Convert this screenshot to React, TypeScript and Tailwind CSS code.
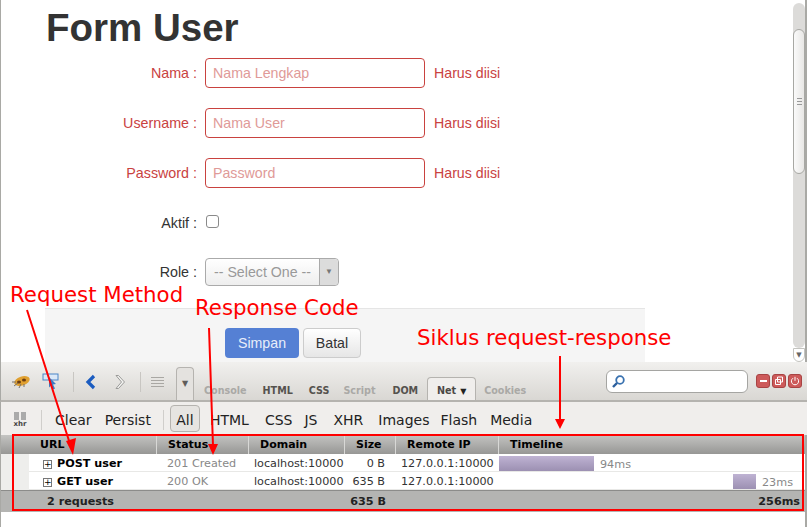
const sansFont = { fontFamily: '"Liberation Sans", Arial, sans-serif' };

const FormRow = ({
  label,
  error,
  rowClass = "mb-5",
  children,
}: {
  label: string;
  error?: string;
  rowClass?: string;
  children: React.ReactNode;
}) => (
  <div className={`flex items-center h-[30px] ${rowClass} ${error ? "text-[#c9423f]" : "text-[#333]"}`}>
    <label className="w-[152px] pt-[2px] text-right text-[14.3px]">{label} :</label>
    <div className="ml-2 w-[220px] shrink-0">{children}</div>
    {error && <span className="ml-[9px] pt-[2px] text-[14.2px]">{error}</span>}
  </div>
);

const TextField = ({ placeholder }: { placeholder: string }) => (
  <input
    readOnly
    placeholder={placeholder}
    className="w-full h-[30px] px-[7px] text-[14.2px] rounded border border-[#c9423f] bg-white placeholder:text-[#e09a98] outline-none"
  />
);

const Scrollbar = () => (
  <div className="w-[14px] shrink-0 flex flex-col bg-white border-r-2 border-[#a9a9a5]">
    <div className="w-3 h-[3px] bg-white" />
    <div className="w-3 flex-1 bg-[#dcdbd9] rounded-t-md rounded-b-md pt-[26px]">
      <div className="h-[145px] w-3 rounded-md border border-[#a8a8a4] bg-gradient-to-r from-[#fafafa] to-[#e8e7e5] flex flex-col items-center justify-center gap-[2px]">
        <span className="w-[5px] h-px bg-[#999]" />
        <span className="w-[5px] h-px bg-[#999]" />
        <span className="w-[5px] h-px bg-[#999]" />
      </div>
    </div>
    <div className="w-3 h-[14px] bg-white border border-[#c4c4c0] rounded-b-md flex items-center justify-center text-[7px] text-[#666]">
      ▼
    </div>
  </div>
);

const FirebugIcon = () => (
  <svg width="20" height="16" viewBox="0 0 20 16">
    <ellipse cx="11" cy="7" rx="8" ry="4.5" fill="#e0a030" transform="rotate(-18 11 7)" />
    <ellipse cx="8" cy="8" rx="2" ry="1.6" fill="#6b3d12" />
    <ellipse cx="13" cy="6" rx="2" ry="1.5" fill="#6b3d12" />
    <path d="M1 8h4M3 12l4-3M8 14l2-4M13 13l0-3" stroke="#77716a" strokeWidth="1" fill="none" />
  </svg>
);

const InspectIcon = () => (
  <svg width="18" height="18" viewBox="0 0 18 18">
    <rect x="1" y="1" width="15" height="6" fill="#dbe8f7" stroke="#4a86c8" />
    <path d="M7 4l7 7-3 .5 2 4-2 1-2-4-2 2z" fill="#3c7cc4" />
  </svg>
);

const Tab = ({ label, muted, ml }: { label: string; muted?: boolean; ml: string }) => (
  <span className={`${ml} pt-[6px] ${muted ? "text-[#aaa9a6]" : "text-[#55524e]"}`}>{label}</span>
);

const FilterItem = ({ label, ml }: { label: string; ml: string }) => (
  <span className={ml}>{label}</span>
);

const columns = [
  { label: "URL", cls: "w-[156px] pl-[39px]" },
  { label: "Status", cls: "w-[92px] pl-[11px]" },
  { label: "Domain", cls: "w-[96px] pl-[11px]" },
  { label: "Size", cls: "w-[51px] pl-[11px]" },
  { label: "Remote IP", cls: "w-[103px] pl-[11px]" },
  { label: "Timeline", cls: "flex-1 pl-[11px]" },
];

const requests = [
  { name: "POST user", status: "201 Created", domain: "localhost:10000", size: "0 B", bar: "ml-0 w-[95px]", time: "94ms" },
  { name: "GET user", status: "200 OK", domain: "localhost:10000", size: "635 B", bar: "ml-[234px] w-[23px]", time: "23ms" },
];

const Annotations = () => (
  <>
    <svg className="absolute inset-0 pointer-events-none" width="807" height="527">
      <path d="M27 310L71 447M209 328L213 446M560 356V421" stroke="#ff0000" strokeWidth="2" fill="none" />
      <path d="M66 441L73 455L76 438zM208 444L213 455L218 444zM555 419L560 429L565 419z" fill="#ff0000" />
      <rect x="13" y="435" width="790" height="75" stroke="#ff0000" strokeWidth="2" fill="none" />
    </svg>
    <span className="absolute left-[10px] top-[281px] text-[21.3px] leading-[28px] text-[#ff0000]">Request Method</span>
    <span className="absolute left-[195px] top-[294px] text-[21.3px] leading-[28px] text-[#ff0000]">Response Code</span>
    <span className="absolute left-[417px] top-[324px] text-[21.3px] leading-[28px] text-[#ff0000]">Siklus request-response</span>
  </>
);

export default function App() {
  return (
    <div
      className="relative w-[807px] h-[527px] overflow-hidden bg-white flex flex-col"
      style={{ fontFamily: '"DejaVu Sans", sans-serif' }}
    >
      {/* Page */}
      <div className="h-[362px] flex border-l border-[#a9a9a5]">
        <div className="flex-1 min-w-0 flex flex-col pl-[44px]" style={sansFont}>
          <h1 className="text-[38.5px] leading-[56px] font-bold text-[#333] mb-[2px] pl-px">Form User</h1>
          <FormRow label="Nama" error="Harus diisi">
            <TextField placeholder="Nama Lengkap" />
          </FormRow>
          <FormRow label="Username" error="Harus diisi">
            <TextField placeholder="Nama User" />
          </FormRow>
          <FormRow label="Password" error="Harus diisi">
            <TextField placeholder="Password" />
          </FormRow>
          <FormRow label="Aktif" rowClass="mb-[19px]">
            <div className="w-[13px] h-[13px] ml-px -mt-[3px] rounded-[3px] border border-[#8a8a8a] bg-white" />
          </FormRow>
          <FormRow label="Role" rowClass="mb-[21px]">
            <div className="w-[134px] h-[28px] flex rounded border border-[#aaa] bg-gradient-to-b from-white to-[#eee] text-[14.2px] text-[#999]">
              <span className="flex-1 pl-2 leading-[26px]">-- Select One --</span>
              <span className="w-[19px] border-l border-[#aaa] bg-[#dcdcdc] rounded-r flex items-center justify-center text-[8px] text-[#777]">
                ▼
              </span>
            </div>
          </FormRow>
          <div className="w-[600px] h-[54px] bg-[#f5f5f5] border-t border-[#e5e5e5] flex items-start pt-[19px] pl-[180px] text-[14.2px]">
            <button className="w-[74px] h-[30px] pt-[2px] rounded bg-[#5580d4] text-[#e8eefa]">Simpan</button>
            <button className="ml-1 w-[58px] h-[30px] pt-[2px] rounded border border-[#ccc] bg-gradient-to-b from-white to-[#e6e6e6] text-[#333]">
              Batal
            </button>
          </div>
        </div>
        <Scrollbar />
      </div>

      {/* Firebug toolbar */}
      <div className="h-[40px] pt-[6px] flex items-end border-l border-[#a9a9a5] border-b-2 border-b-[#b5b3af] bg-gradient-to-b from-[#f1f0ee] to-[#d9d7d3] text-[9.6px] font-bold">
        <div className="flex items-center h-[32px] pb-1 ml-[10px]">
          <FirebugIcon />
          <div className="ml-[11px]"><InspectIcon /></div>
          <span className="ml-[13px] w-px h-5 bg-[#c8c6c2]" />
          <svg className="ml-[11px]" width="12" height="16" viewBox="0 0 12 16">
            <path d="M9 2L3 8l6 6" stroke="#1b5cc0" strokeWidth="3.2" fill="none" />
          </svg>
          <svg className="ml-[17px]" width="12" height="16" viewBox="0 0 12 16">
            <path d="M2 1.5h2.5L10.5 8l-6 6.5H2L7.5 8z" stroke="#9a9a98" strokeWidth="1" fill="#f4f4f2" />
          </svg>
          <span className="ml-[14px] w-px h-5 bg-[#c8c6c2]" />
          <div className="ml-[10px] flex flex-col gap-[2px]">
            <span className="w-[13px] h-px bg-[#a9a7a3]" />
            <span className="w-[13px] h-px bg-[#a9a7a3]" />
            <span className="w-[13px] h-px bg-[#a9a7a3]" />
            <span className="w-[13px] h-px bg-[#a9a7a3]" />
          </div>
        </div>
        <div className="ml-[12px] w-[18px] h-[33px] border border-b-0 border-[#b5b3af] rounded-t bg-[#e4e2df] flex items-center justify-center text-[8px] text-[#5f5d5a]">
          ▼
        </div>
        <div className="flex items-center h-[23px] ml-[10px]">
          <Tab label="Console" muted ml="ml-0" />
          <Tab label="HTML" ml="ml-[16px]" />
          <Tab label="CSS" ml="ml-[16px]" />
          <Tab label="Script" muted ml="ml-[14px]" />
          <Tab label="DOM" ml="ml-[17px]" />
          <div className="ml-[9px] w-[49px] h-[23px] pt-[5px] border border-b-0 border-[#b5b3af] rounded-t bg-[#f0eeec] flex items-center justify-center gap-[4px] text-[#4a4845]">
            Net <span className="text-[8px] text-[#222]">▼</span>
          </div>
          <Tab label="Cookies" muted ml="ml-[8px]" />
        </div>
        <div className="ml-auto flex items-center h-[32px] pb-[6px]">
          <div className="w-[142px] h-[23px] rounded-md border border-[#a5a5a2] bg-white flex items-center pl-1">
            <svg width="15" height="15" viewBox="0 0 15 15">
              <circle cx="9" cy="6" r="3.8" stroke="#3a72b0" strokeWidth="1.8" fill="none" />
              <path d="M6 9l-4 4" stroke="#2c5f9c" strokeWidth="2.4" />
            </svg>
          </div>
          <div className="ml-2 flex gap-[2px] mr-[5px]">
            <span className="w-[14px] h-[14px] rounded-[3px] bg-[#cd5a5a] border border-[#a84444] flex items-center justify-center">
              <span className="w-[7px] h-[2px] bg-white" />
            </span>
            <span className="w-[14px] h-[14px] rounded-[3px] bg-[#cd5a5a] border border-[#a84444] flex items-center justify-center">
              <svg width="10" height="10" viewBox="0 0 10 10">
                <path d="M3.5 1h5v5h-5zM1.5 3.5h5v5h-5z" stroke="#fff" fill="none" />
              </svg>
            </span>
            <span className="w-[14px] h-[14px] rounded-[3px] bg-[#cd5a5a] border border-[#a84444] flex items-center justify-center">
              <svg width="10" height="10" viewBox="0 0 10 10">
                <path d="M3 2.2a3.6 3.6 0 1 0 4 0M5 .8v4" stroke="#fff" fill="none" />
              </svg>
            </span>
          </div>
        </div>
      </div>

      {/* Net filter bar */}
      <div className="h-[33px] pt-[2px] flex items-center border-l border-[#a9a9a5] bg-[#f0eeec] text-sm text-[#222]">
        <div className="ml-[12px] w-[14px] flex flex-col items-center text-[7px] leading-[8px] font-bold text-[#444]">
          <div className="flex gap-[2px]">
            <span className="w-[5px] h-[8px] bg-[#aaa]" />
            <span className="w-[5px] h-[8px] bg-[#aaa]" />
          </div>
          xhr
        </div>
        <span className="ml-[14px] w-px h-5 bg-[#d0cecb]" />
        <FilterItem label="Clear" ml="ml-[13px]" />
        <FilterItem label="Persist" ml="ml-[13px]" />
        <span className="ml-[12px] w-px h-5 bg-[#d0cecb]" />
        <span className="ml-[6px] -mt-[2px] pt-[2px] w-[30px] h-[27px] rounded-[4px] border border-[#b5b3af] bg-[#e6e4e1] flex items-center justify-center">
          All
        </span>
        <FilterItem label="HTML" ml="ml-[10px]" />
        <FilterItem label="CSS" ml="ml-[16px]" />
        <FilterItem label="JS" ml="ml-[12px]" />
        <FilterItem label="XHR" ml="ml-[16px]" />
        <FilterItem label="Images" ml="ml-[15px]" />
        <FilterItem label="Flash" ml="ml-[11px]" />
        <FilterItem label="Media" ml="ml-[13px]" />
      </div>

      {/* Request table */}
      <div className="border-l border-r-2 border-l-[#a9a9a5] border-r-[#a9a9a5] text-[11.2px]">
        <div className="flex h-[19px] items-center font-bold text-[11px] text-black bg-gradient-to-b from-[#c4c4c2] to-[#979795]">
          {columns.map((c) => (
            <div key={c.label} className={`${c.cls} h-full leading-[20px] border-r border-[#d8d8d6] last:border-r-0`}>
              {c.label}
            </div>
          ))}
        </div>
        <div className="bg-[#eeeeec]">
          {requests.map((r) => (
            <div key={r.name} className="flex h-[18px] pt-[4px] ml-[28px] bg-white border-b border-[#e8e8e6] items-center">
              <div className="w-[128px] flex items-center pl-[14px] font-bold text-black">
                <span className="w-[9px] h-[9px] border border-[#777] text-[9px] leading-[7px] text-center font-normal mr-[5px]">+</span>
                {r.name}
              </div>
              <div className="w-[87px] pl-[10px] text-[#888]">{r.status}</div>
              <div className="w-[100px] pl-[10px] whitespace-nowrap text-[#333]">{r.domain}</div>
              <div className="w-[41px] text-right text-[#333]">{r.size}</div>
              <div className="w-[114px] pl-[16px] whitespace-nowrap text-[#333]">127.0.0.1:10000</div>
              <div className="flex-1 flex items-center">
                <span className={`${r.bar} -mt-[2px] h-[15px] bg-gradient-to-b from-[#bfb3d3] to-[#9c90b2]`} />
                <span className="ml-[6px] pt-[2px] text-[#888]">{r.time}</span>
              </div>
            </div>
          ))}
        </div>
        <div className="flex h-[22px] pt-[2px] items-center font-bold text-[#222] bg-[#b4b4b2] border-t border-[#8c8c8a]">
          <span className="w-[338px] pl-[46px]">2 requests</span>
          <span className="w-[47px] text-right">635 B</span>
          <span className="ml-auto pr-[5px]">256ms</span>
        </div>
      </div>
      <div className="flex-1 bg-white border-l border-r-2 border-l-[#a9a9a5] border-r-[#a9a9a5]" />

      <Annotations />
    </div>
  );
}
